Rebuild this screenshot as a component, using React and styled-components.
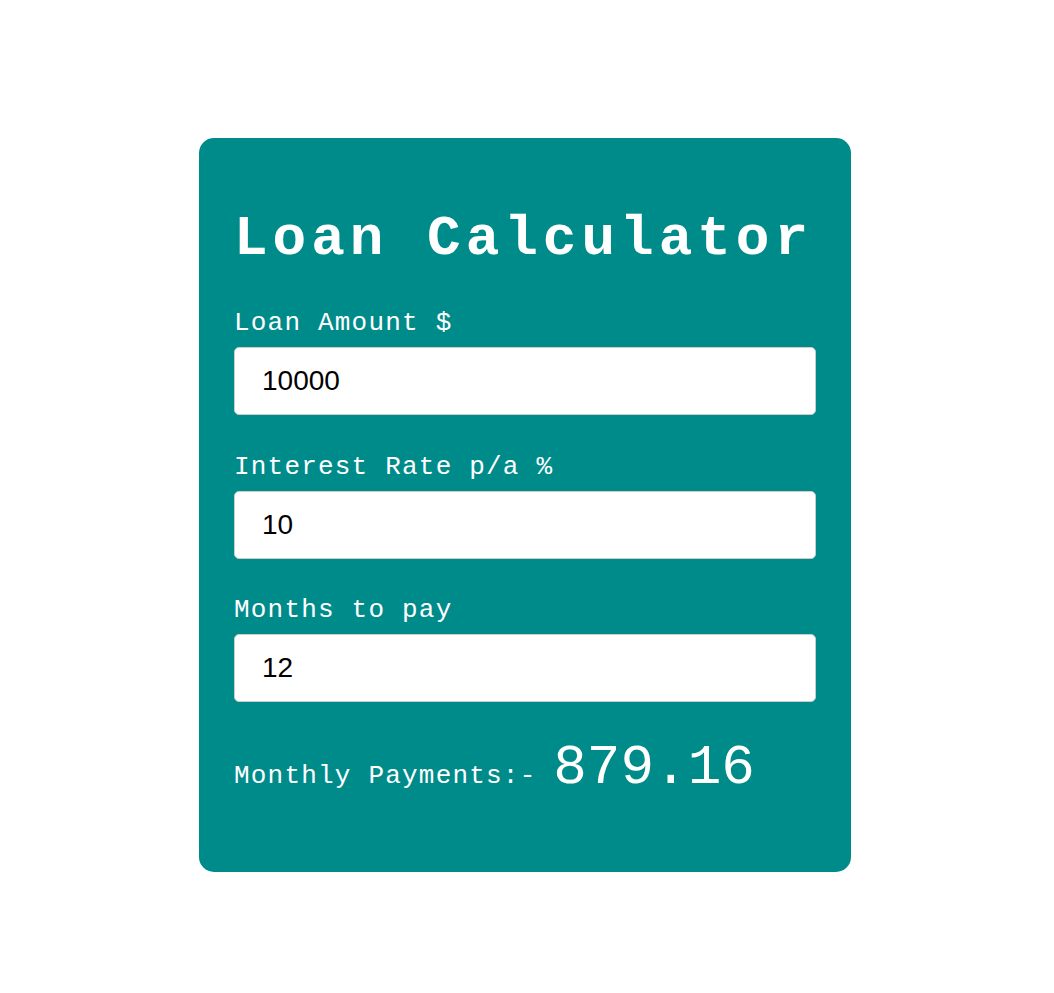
import React, { useState } from 'react';
import styled, { createGlobalStyle } from 'styled-components';

const GlobalStyle = createGlobalStyle`
  body {
    margin: 0;
    background: #ffffff;
    font-family: "Liberation Mono", "Courier New", monospace;
  }
`;

const Page = styled.div`
  min-height: 993px;
  padding: 138px 4px 0 0;
  box-sizing: border-box;

  /* Flex Parent */
  display: flex;
  justify-content: center;
  align-items: flex-start;
`;

const Card = styled.div`
  width: 652px;
  height: 734px;
  box-sizing: border-box;
  padding: 73px 35px 0 35px;
  background: #008b8b;
  border-radius: 15px;
  color: #ffffff;
`;

const Title = styled.h1`
  margin: 0 0 42px 0;
  font-family: "Liberation Mono", "Courier New", monospace;
  font-size: 56px;
  font-weight: 700;
  line-height: 56px;
  letter-spacing: 5px;
  white-space: nowrap;
`;

const Field = styled.div`
  margin-bottom: 37.5px;
`;

const Label = styled.label`
  display: block;
  margin-bottom: 10px;
  font-size: 26px;
  line-height: 28px;
  letter-spacing: 1.2px;
`;

const Input = styled.input`
  display: block;
  width: 100%;
  height: 68px;
  box-sizing: border-box;
  padding: 0 27px;
  border: 1px solid #cccccc;
  border-radius: 5px;
  background: #ffffff;
  color: #000000;
  font-family: "Liberation Sans", Arial, sans-serif;
  font-size: 28px;
  outline: none;
`;

const Result = styled.div`
  margin-top: 6px;
  font-size: 26px;
  line-height: 56px;
  letter-spacing: 1.2px;
  white-space: nowrap;
`;

const Amount = styled.span`
  font-size: 56px;
  line-height: 56px;
  letter-spacing: 0;
`;

const calcMonthly = (amount, rate, months) => {
  const p = parseFloat(amount);
  const r = parseFloat(rate) / 100 / 12;
  const n = parseFloat(months);
  if (!p || !n) return '0.00';
  if (!r) return (p / n).toFixed(2);
  const x = Math.pow(1 + r, n);
  return ((p * r * x) / (x - 1)).toFixed(2);
};

const App = () => {
  const [fields, setFields] = useState({ amount: '10000', rate: '10', months: '12' });

  const handleChange = (e) => {
    setFields({ ...fields, [e.target.name]: e.target.value });
  };

  return (
    <>
      <GlobalStyle />
      <Page>
        <Card>
          <Title>Loan Calculator</Title>
          <Field>
            <Label>Loan Amount $</Label>
            <Input type="text" name="amount" value={fields.amount} onChange={handleChange} />
          </Field>
          <Field>
            <Label>Interest Rate p/a %</Label>
            <Input type="text" name="rate" value={fields.rate} onChange={handleChange} />
          </Field>
          <Field>
            <Label>Months to pay</Label>
            <Input type="text" name="months" value={fields.months} onChange={handleChange} />
          </Field>
          <Result>
            Monthly Payments:- <Amount>{calcMonthly(fields.amount, fields.rate, fields.months)}</Amount>
          </Result>
        </Card>
      </Page>
    </>
  );
};

export default App;
